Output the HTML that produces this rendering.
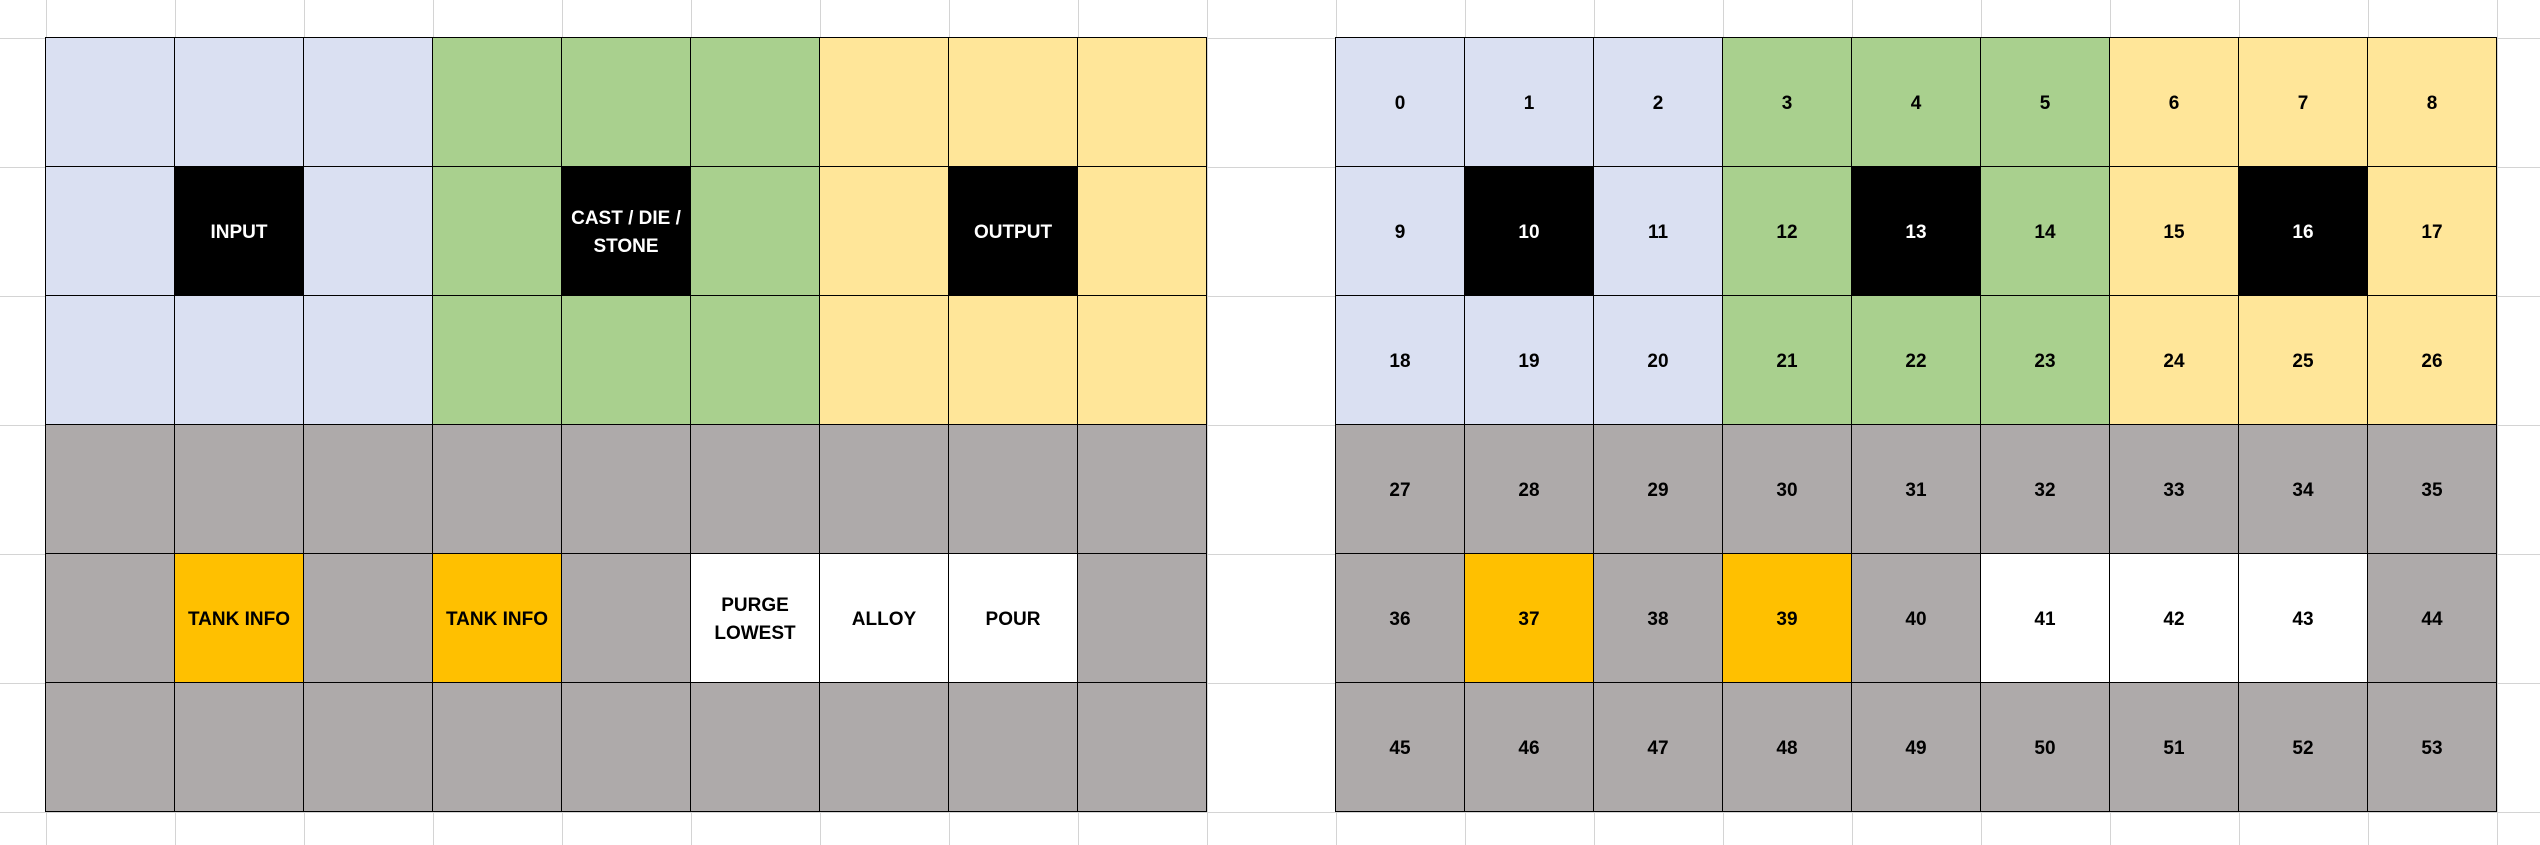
<!DOCTYPE html>
<html><head><meta charset="utf-8"><style>
html,body{margin:0;padding:0}
body{width:2540px;height:845px;overflow:hidden;position:relative;background-color:#fff;
background-image:linear-gradient(to right,#d4d4d4 1px,transparent 1px),linear-gradient(to bottom,#d4d4d4 1px,transparent 1px);
background-size:129px 129px;background-position:46px 38px;
font-family:"Liberation Sans",Arial,sans-serif;font-weight:bold;font-size:19px}
.g{position:absolute;top:37px;display:grid;grid-template-columns:repeat(9,129px);grid-template-rows:repeat(6,129px);border-left:1.5px solid #000;border-top:1.5px solid #000}
.g div{box-sizing:border-box;border-right:1.5px solid #000;border-bottom:1.5px solid #000;display:flex;align-items:center;justify-content:center;text-align:center;line-height:28px;color:#000;padding-top:3px}
.b{background:#dae0f2}.n{background:#a9d08e}.y{background:#ffe699}.k{background:#000;color:#fff!important}.r{background:#aeaaaa}.o{background:#ffc000}.w{background:#fff}
</style></head><body>
<div class="g" style="left:45px">
<div class="b"></div><div class="b"></div><div class="b"></div><div class="n"></div><div class="n"></div><div class="n"></div><div class="y"></div><div class="y"></div><div class="y"></div>
<div class="b"></div><div class="k">INPUT</div><div class="b"></div><div class="n"></div><div class="k">CAST / DIE /<br>STONE</div><div class="n"></div><div class="y"></div><div class="k">OUTPUT</div><div class="y"></div>
<div class="b"></div><div class="b"></div><div class="b"></div><div class="n"></div><div class="n"></div><div class="n"></div><div class="y"></div><div class="y"></div><div class="y"></div>
<div class="r"></div><div class="r"></div><div class="r"></div><div class="r"></div><div class="r"></div><div class="r"></div><div class="r"></div><div class="r"></div><div class="r"></div>
<div class="r"></div><div class="o">TANK INFO</div><div class="r"></div><div class="o">TANK INFO</div><div class="r"></div><div class="w">PURGE<br>LOWEST</div><div class="w">ALLOY</div><div class="w">POUR</div><div class="r"></div>
<div class="r"></div><div class="r"></div><div class="r"></div><div class="r"></div><div class="r"></div><div class="r"></div><div class="r"></div><div class="r"></div><div class="r"></div>
</div>
<div class="g" style="left:1335px">
<div class="b">0</div><div class="b">1</div><div class="b">2</div><div class="n">3</div><div class="n">4</div><div class="n">5</div><div class="y">6</div><div class="y">7</div><div class="y">8</div>
<div class="b">9</div><div class="k">10</div><div class="b">11</div><div class="n">12</div><div class="k">13</div><div class="n">14</div><div class="y">15</div><div class="k">16</div><div class="y">17</div>
<div class="b">18</div><div class="b">19</div><div class="b">20</div><div class="n">21</div><div class="n">22</div><div class="n">23</div><div class="y">24</div><div class="y">25</div><div class="y">26</div>
<div class="r">27</div><div class="r">28</div><div class="r">29</div><div class="r">30</div><div class="r">31</div><div class="r">32</div><div class="r">33</div><div class="r">34</div><div class="r">35</div>
<div class="r">36</div><div class="o">37</div><div class="r">38</div><div class="o">39</div><div class="r">40</div><div class="w">41</div><div class="w">42</div><div class="w">43</div><div class="r">44</div>
<div class="r">45</div><div class="r">46</div><div class="r">47</div><div class="r">48</div><div class="r">49</div><div class="r">50</div><div class="r">51</div><div class="r">52</div><div class="r">53</div>
</div>
</body></html>
